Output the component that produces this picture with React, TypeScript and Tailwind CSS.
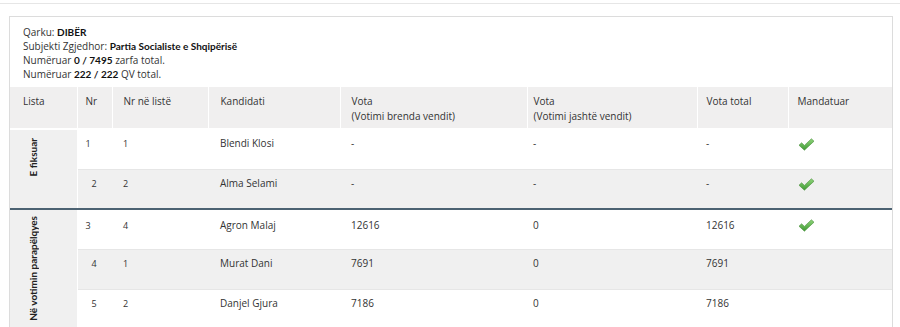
import React from "react";

function Check() {
  return (
    <svg width="17" height="13" viewBox="0 0 17 13" className="block">
      <defs>
        <linearGradient id="g" x1="0" y1="0" x2="0" y2="1">
          <stop offset="0" stopColor="#8fd47a" />
          <stop offset="1" stopColor="#3f9a34" />
        </linearGradient>
      </defs>
      <path
        d="M1 7.2 L3.6 4.8 L6.4 7.4 L13.4 0.8 L16 3.2 L6.4 12.2 Z"
        fill="url(#g)"
        stroke="#4a8f3c"
        strokeWidth="0.6"
        strokeLinejoin="round"
      />
    </svg>
  );
}

type Row = {
  nr: string;
  nrShift: boolean;
  nl: string;
  name: string;
  v1: string;
  v2: string;
  vt: string;
  m: boolean;
  gray: boolean;
};

const g1: Row[] = [
  { nr: "1", nrShift: false, nl: "1", name: "Blendi Klosi", v1: "-", v2: "-", vt: "-", m: true, gray: false },
  { nr: "2", nrShift: true, nl: "2", name: "Alma Selami", v1: "-", v2: "-", vt: "-", m: true, gray: true },
];
const g2: Row[] = [
  { nr: "3", nrShift: false, nl: "4", name: "Agron Malaj", v1: "12616", v2: "0", vt: "12616", m: true, gray: false },
  { nr: "4", nrShift: true, nl: "1", name: "Murat Dani", v1: "7691", v2: "0", vt: "7691", m: false, gray: true },
  { nr: "5", nrShift: true, nl: "2", name: "Danjel Gjura", v1: "7186", v2: "0", vt: "7186", m: false, gray: false },
];

function Group({ label, rows, last }: { label: string; rows: Row[]; last?: boolean }) {
  return (
    <>
      {rows.map((r, i) => {
        const pt = last && i === 0 ? "pt-[8px]" : "pt-[6px]";
        const ptn = last && i === 0 ? "pt-[9px]" : "pt-[7px]";
        return (
          <tr
            key={i}
            className={`${r.gray ? "bg-[#f0f0f0]" : "bg-white"} ${
              i === rows.length - 1 && !last ? "border-b-2 border-b-[#4c6272]" : "border-b border-b-[#e6e6e6]"
            }`}
          >
            {i === 0 && (
              <td
                rowSpan={rows.length}
                className={`bg-[#f0f0f0] align-top ${last ? "pt-[6px]" : "pt-[8px]"} border-r border-r-white`}
              >
                <div className="h-0 overflow-visible pl-[17px]">
                  <span className="inline-block [writing-mode:vertical-rl] rotate-180 font-['Lato',sans-serif] font-bold text-[10px] leading-[12px] text-[#222] whitespace-nowrap">
                    {label}
                  </span>
                </div>
              </td>
            )}
            <td className={`align-top ${ptn} h-[40px] text-[9px] ${r.nrShift ? "pl-[14px]" : "pl-[8px]"}`}>{r.nr}</td>
            <td className={`align-top ${ptn} pl-[11px] text-[9px]`}>{r.nl}</td>
            <td className={`align-top ${pt} pl-[12px]`}>{r.name}</td>
            <td className={`align-top ${pt} pl-[11px]`}>{r.v1}</td>
            <td className={`align-top ${pt} pl-[6px]`}>{r.v2}</td>
            <td className={`align-top ${pt} pl-[9px]`}>{r.vt}</td>
            <td className={`align-top ${last && i === 0 ? "pt-[9px]" : "pt-[8px]"} pl-[10px]`}>{r.m ? <Check /> : null}</td>
          </tr>
        );
      })}
    </>
  );
}

const B = ({ children }: { children: React.ReactNode }) => (
  <b className="font-['Lato',sans-serif] font-bold leading-[10px] text-[#111]">{children}</b>
);

export default function App() {
  return (
    <div className="w-[900px] h-[327px] overflow-hidden bg-white text-[#333] font-['Open_Sans',sans-serif] text-[10px]">
      <div className="mt-[3px] border-t border-t-[#e6e6e6]" />
      <div className="ml-[9px] mr-[7px] mt-[12px] border border-[#dcdcdc] border-b-0">
        <div className="px-[13px] pt-[8px] pb-[6px] leading-[14px] text-[10px] text-[#333]">
          <div>
            Qarku: <B>DIBËR</B>
          </div>
          <div>
            Subjekti Zgjedhor: <B>Partia Socialiste e Shqipërisë</B>
          </div>
          <div>
            Numëruar <B>0 / 7495</B> zarfa total.
          </div>
          <div>
            Numëruar <B>222 / 222</B> QV total.
          </div>
        </div>
        <table className="w-full border-collapse table-fixed text-[10px] leading-[14px]">
          <colgroup>
            <col className="w-[67px]" />
            <col className="w-[35px]" />
            <col className="w-[96px]" />
            <col className="w-[132px]" />
            <col className="w-[187px]" />
            <col className="w-[170px]" />
            <col className="w-[91px]" />
            <col />
          </colgroup>
          <thead>
            <tr className="bg-[#f0efef] h-[42px] border-b-2 border-b-white">
              <th className="text-left font-normal align-top pt-[7px] pl-[13px] border-r border-r-white">Lista</th>
              <th className="text-left font-normal align-top pt-[7px] pl-[8px] border-r border-r-white">Nr</th>
              <th className="text-left font-normal align-top pt-[7px] pl-[11px] border-r border-r-white">Nr në listë</th>
              <th className="text-left font-normal align-top pt-[7px] pl-[12px] border-r border-r-white">Kandidati</th>
              <th className="text-left font-normal align-top pt-[7px] pl-[11px] border-r border-r-white leading-[15px]">
                Vota
                <br />
                (Votimi brenda vendit)
              </th>
              <th className="text-left font-normal align-top pt-[7px] pl-[6px] border-r border-r-white leading-[15px]">
                Vota
                <br />
                (Votimi jashtë vendit)
              </th>
              <th className="text-left font-normal align-top pt-[7px] pl-[9px] border-r border-r-white">Vota total</th>
              <th className="text-left font-normal align-top pt-[7px] pl-[9px]">Mandatuar</th>
            </tr>
          </thead>
          <tbody>
            <Group label="E fiksuar" rows={g1} />
            <Group label="Në votimin parapëlqyes" rows={g2} last />
          </tbody>
        </table>
      </div>
    </div>
  );
}
